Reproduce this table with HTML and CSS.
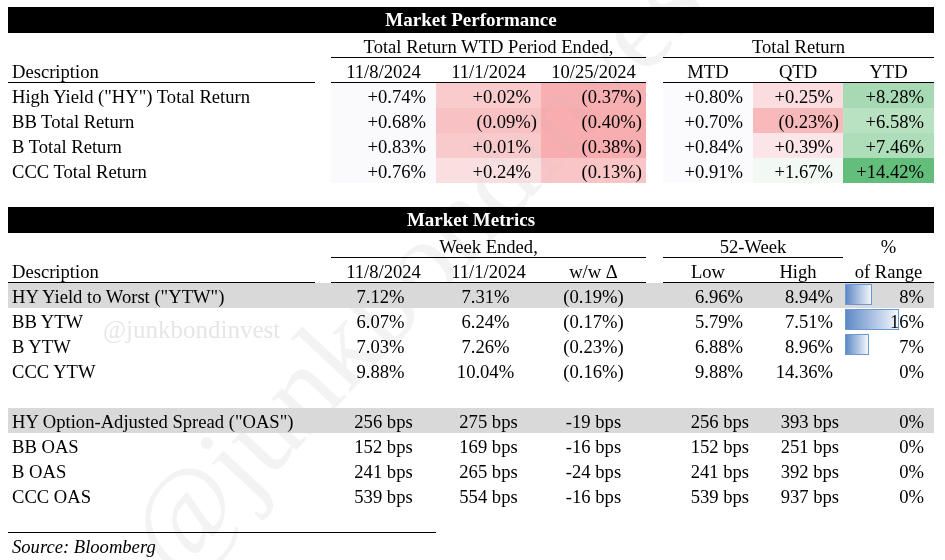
FILE: index.html
```html
<!DOCTYPE html>
<html lang="en">
<head>
<meta charset="utf-8">
<title>Market Performance</title>
<link rel="stylesheet" href="styles.css">
</head>
<body>
<div class="page">
  <div class="title">Market Performance</div>
  <div class="row">
    <div class="s3a u ctr">Total Return WTD Period Ended,</div>
    <div class="s3b u ctr">Total Return</div>
  </div>
  <div class="row">
    <div class="k1 u desc">Description</div>
    <div class="k3 u ctr">11/8/2024</div>
    <div class="k4 u ctr">11/1/2024</div>
    <div class="k5 u ctr">10/25/2024</div>
    <div class="k7 u ctr">MTD</div>
    <div class="k8 u ctr">QTD</div>
    <div class="k9 u ctr">YTD</div>
  </div>
  <div class="row">
    <div class="k1 desc">High Yield ("HY") Total Return</div>
    <div class="k3 num h-w1"><span class="p">+0.74%</span></div>
    <div class="k4 num h-r2"><span class="p">+0.02%</span></div>
    <div class="k5 num h-r5">(0.37%)</div>
    <div class="k7 num h-w2"><span class="p">+0.80%</span></div>
    <div class="k8 num h-r1"><span class="p">+0.25%</span></div>
    <div class="k9 num h-g3"><span class="p">+8.28%</span></div>
  </div>
  <div class="row">
    <div class="k1 desc">BB Total Return</div>
    <div class="k3 num h-w1"><span class="p">+0.68%</span></div>
    <div class="k4 num h-r3">(0.09%)</div>
    <div class="k5 num h-r6">(0.40%)</div>
    <div class="k7 num h-w2"><span class="p">+0.70%</span></div>
    <div class="k8 num h-r4">(0.23%)</div>
    <div class="k9 num h-g1"><span class="p">+6.58%</span></div>
  </div>
  <div class="row">
    <div class="k1 desc">B Total Return</div>
    <div class="k3 num h-w1"><span class="p">+0.83%</span></div>
    <div class="k4 num h-r2b"><span class="p">+0.01%</span></div>
    <div class="k5 num h-r5b">(0.38%)</div>
    <div class="k7 num h-w2"><span class="p">+0.84%</span></div>
    <div class="k8 num h-r0"><span class="p">+0.39%</span></div>
    <div class="k9 num h-g2"><span class="p">+7.46%</span></div>
  </div>
  <div class="row">
    <div class="k1 desc">CCC Total Return</div>
    <div class="k3 num h-w1"><span class="p">+0.76%</span></div>
    <div class="k4 num h-r1b"><span class="p">+0.24%</span></div>
    <div class="k5 num h-r3b">(0.13%)</div>
    <div class="k7 num h-w2"><span class="p">+0.91%</span></div>
    <div class="k8 num h-g0"><span class="p">+1.67%</span></div>
    <div class="k9 num h-g4"><span class="p">+14.42%</span></div>
  </div>

  <div class="spacer"></div>

  <div class="title">Market Metrics</div>
  <div class="row">
    <div class="s3a u ctr">Week Ended,</div>
    <div class="s2b u ctr">52-Week</div>
    <div class="k9 ctr">%</div>
  </div>
  <div class="row">
    <div class="k1 u desc">Description</div>
    <div class="k3 u ctr">11/8/2024</div>
    <div class="k4 u ctr">11/1/2024</div>
    <div class="k5 u ctr">w/w Δ</div>
    <div class="k7 u ctr">Low</div>
    <div class="k8 u ctr">High</div>
    <div class="k9 u ctr">of Range</div>
  </div>
  <div class="row shade">
    <div class="k1 desc">HY Yield to Worst ("YTW")</div>
    <div class="k3 ctr"><span class="p">7.12%</span></div>
    <div class="k4 ctr"><span class="p">7.31%</span></div>
    <div class="k5 ctr">(0.19%)</div>
    <div class="k7 num"><span class="p">6.96%</span></div>
    <div class="k8 num"><span class="p">8.94%</span></div>
    <div class="k9 num bar-cell"><span class="bar" style="width:27px"></span><span class="p txt">8%</span></div>
  </div>
  <div class="row">
    <div class="k1 desc">BB YTW</div>
    <div class="k3 ctr"><span class="p">6.07%</span></div>
    <div class="k4 ctr"><span class="p">6.24%</span></div>
    <div class="k5 ctr">(0.17%)</div>
    <div class="k7 num"><span class="p">5.79%</span></div>
    <div class="k8 num"><span class="p">7.51%</span></div>
    <div class="k9 num bar-cell"><span class="bar" style="width:54px"></span><span class="p txt">16%</span></div>
  </div>
  <div class="row">
    <div class="k1 desc">B YTW</div>
    <div class="k3 ctr"><span class="p">7.03%</span></div>
    <div class="k4 ctr"><span class="p">7.26%</span></div>
    <div class="k5 ctr">(0.23%)</div>
    <div class="k7 num"><span class="p">6.88%</span></div>
    <div class="k8 num"><span class="p">8.96%</span></div>
    <div class="k9 num bar-cell"><span class="bar" style="width:24px"></span><span class="p txt">7%</span></div>
  </div>
  <div class="row">
    <div class="k1 desc">CCC YTW</div>
    <div class="k3 ctr"><span class="p">9.88%</span></div>
    <div class="k4 ctr"><span class="p">10.04%</span></div>
    <div class="k5 ctr">(0.16%)</div>
    <div class="k7 num"><span class="p">9.88%</span></div>
    <div class="k8 num"><span class="p">14.36%</span></div>
    <div class="k9 num"><span class="p">0%</span></div>
  </div>
  <div class="row"></div>
  <div class="row shade">
    <div class="k1 desc">HY Option-Adjusted Spread ("OAS")</div>
    <div class="k3 ctr">256 bps</div>
    <div class="k4 ctr">275 bps</div>
    <div class="k5 ctr">-19 bps</div>
    <div class="k7 num">256 bps</div>
    <div class="k8 num">393 bps</div>
    <div class="k9 num"><span class="p">0%</span></div>
  </div>
  <div class="row">
    <div class="k1 desc">BB OAS</div>
    <div class="k3 ctr">152 bps</div>
    <div class="k4 ctr">169 bps</div>
    <div class="k5 ctr">-16 bps</div>
    <div class="k7 num">152 bps</div>
    <div class="k8 num">251 bps</div>
    <div class="k9 num"><span class="p">0%</span></div>
  </div>
  <div class="row">
    <div class="k1 desc">B OAS</div>
    <div class="k3 ctr">241 bps</div>
    <div class="k4 ctr">265 bps</div>
    <div class="k5 ctr">-24 bps</div>
    <div class="k7 num">241 bps</div>
    <div class="k8 num">392 bps</div>
    <div class="k9 num"><span class="p">0%</span></div>
  </div>
  <div class="row">
    <div class="k1 desc">CCC OAS</div>
    <div class="k3 ctr">539 bps</div>
    <div class="k4 ctr">554 bps</div>
    <div class="k5 ctr">-16 bps</div>
    <div class="k7 num">539 bps</div>
    <div class="k8 num">937 bps</div>
    <div class="k9 num"><span class="p">0%</span></div>
  </div>
  <div class="row">
    <div class="s3left u"></div>
  </div>
  <div class="row">
    <div class="s3left desc src">Source: Bloomberg</div>
  </div>

  <div class="wm-big">@junkbondinvest</div>
  <div class="wm-small">@junkbondinvest</div>
</div>
</body>
</html>
```
FILE: styles.css
```css
* {
  box-sizing: border-box;
  margin: 0;
  padding: 0;
}

body {
  margin: 0;
  background: #ffffff;
  font-family: "Liberation Serif", "Times New Roman", serif;
  font-size: 18.6px;
  color: #000000;
}

.page {
  position: relative;
  width: 945px;
  height: 560px;
  overflow: hidden;
  padding: 7px 0 0 8px;
}

.title {
  width: 926px;
  height: 26px;
  line-height: 26px;
  background: #000000;
  color: #ffffff;
  font-weight: bold;
  font-size: 19px;
  text-align: center;
}

.row {
  display: grid;
  grid-template-columns: 307px 16px 105px 105px 105px 17px 90px 90px 91px;
  width: 926px;
  height: 25px;
  line-height: 25px;
}

.row > div {
  height: 25px;
  padding-top: 1px;
  white-space: nowrap;
}

.spacer {
  height: 24px;
}

.shade {
  background: #d9d9d9;
}

.k1 { grid-column: 1; }
.k3 { grid-column: 3; }
.k4 { grid-column: 4; }
.k5 { grid-column: 5; }
.k7 { grid-column: 7; }
.k8 { grid-column: 8; }
.k9 { grid-column: 9; }
.s3a { grid-column: 3 / span 3; }
.s3b { grid-column: 7 / span 3; }
.s2b { grid-column: 7 / span 2; }
.s3left { grid-column: 1 / span 3; }

.u {
  border-bottom: 1px solid #000000;
}

.ctr {
  text-align: center;
}

.row > .num {
  text-align: right;
  padding-right: 4px;
}

.row > .desc {
  padding-left: 4px;
}

.p {
  padding-right: 6px;
}

.src {
  font-style: italic;
}

/* heat map colours */
.h-w1 { background: #fafafd; }
.h-w2 { background: #fbfbfe; }
.h-r0 { background: #fbe5e8; }
.h-r1 { background: #fbdcdf; }
.h-r1b { background: #fadfe1; }
.h-r2 { background: #f9cbcd; }
.h-r2b { background: #f9cacc; }
.h-r3 { background: #f8c2c4; }
.h-r3b { background: #f9c5c7; }
.h-r4 { background: #f8b9bb; }
.h-r5 { background: #f8afb1; }
.h-r5b { background: #f8aeb0; }
.h-r6 { background: #f8adaf; }
.h-g0 { background: #f2f8f4; }
.h-g1 { background: #b9e2c3; }
.h-g2 { background: #aeddba; }
.h-g3 { background: #a7dab4; }
.h-g4 { background: #63be7b; }

/* data bars */
.bar-cell {
  position: relative;
}

.bar {
  position: absolute;
  left: 2px;
  top: 1px;
  height: 21px;
  border: 1px solid #6b97d2;
  background: linear-gradient(to right, #5f8ac7, #f3f6fc);
}

.txt {
  position: relative;
}

/* watermarks */
.wm-big {
  position: absolute;
  left: 175px;
  top: 484px;
  font-size: 115px;
  line-height: 115px;
  color: #f3f3f3;
  white-space: nowrap;
  transform-origin: 0 96px;
  transform: rotate(-47deg);
  mix-blend-mode: darken;
  pointer-events: none;
}

.wm-small {
  position: absolute;
  left: 103px;
  top: 317px;
  font-size: 25px;
  line-height: 25px;
  color: #e6e6e6;
  white-space: nowrap;
  mix-blend-mode: darken;
  pointer-events: none;
}
```
